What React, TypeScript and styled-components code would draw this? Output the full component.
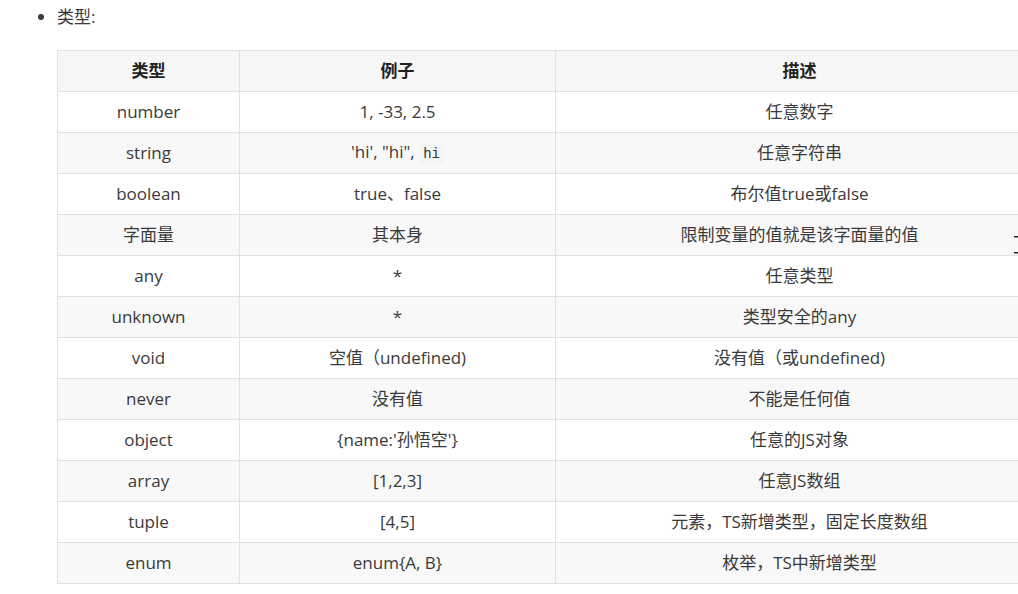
import React from "react";
import styled, { createGlobalStyle } from "styled-components";

const GlobalStyle = createGlobalStyle`
  html, body {
    margin: 0;
    padding: 0;
    overflow: hidden;
    background: #ffffff;
  }
  body {
    font-family: "Open Sans", "Noto Sans CJK SC", sans-serif;
    color: #333333;
  }
`;

const Page = styled.div`
  width: 1018px;
  height: 594px;
  overflow: hidden;
  position: relative;
`;

const List = styled.ul`
  margin: 0;
  padding: 5px 0 0 57px;
  list-style: disc;
`;

const Item = styled.li`
  font-size: 17px;
  line-height: 24px;
  color: #3a3a3a;
`;

const Table = styled.table`
  margin-top: 21px;
  width: 986px;
  border-collapse: collapse;
  table-layout: fixed;
  font-size: 17px;
`;

const Row = styled.tr<{ striped?: boolean }>`
  background-color: ${(p) => (p.striped ? "#f8f8f8" : "#ffffff")};
`;

const HeadCell = styled.th`
  height: 40px;
  padding: 0 13px;
  border: 1px solid #dfe2e5;
  background-color: #f6f6f6;
  font-weight: 700;
  text-align: center;
  color: #222;
`;

const Cell = styled.td`
  height: 40px;
  padding: 0 13px;
  border: 1px solid #dfe2e5;
  text-align: center;
  color: #3a3a3a;
`;

const Code = styled.code`
  font-family: "Liberation Mono", "DejaVu Sans Mono", monospace;
  font-size: 14px;
  background-color: #f3f4f4;
  padding: 2px 4px;
  border-radius: 3px;
  color: #333;
`;

const EdgeMark = styled.svg`
  position: absolute;
  left: 1014px;
  top: 234px;
`;

const rows: [React.ReactNode, React.ReactNode, React.ReactNode][] = [
  ["number", "1, -33, 2.5", "任意数字"],
  [
    "string",
    <>
      'hi', "hi", <Code>hi</Code>
    </>,
    "任意字符串",
  ],
  ["boolean", "true、false", "布尔值true或false"],
  ["字面量", "其本身", "限制变量的值就是该字面量的值"],
  ["any", "*", "任意类型"],
  ["unknown", "*", "类型安全的any"],
  ["void", "空值（undefined)", "没有值（或undefined)"],
  ["never", "没有值", "不能是任何值"],
  ["object", "{name:'孙悟空'}", "任意的JS对象"],
  ["array", "[1,2,3]", "任意JS数组"],
  ["tuple", "[4,5]", "元素，TS新增类型，固定长度数组"],
  ["enum", "enum{A, B}", "枚举，TS中新增类型"],
];

export default function App() {
  return (
    <Page>
      <GlobalStyle />
      <List>
        <Item>
          类型:
          <Table>
            <colgroup>
              <col style={{ width: 182 }} />
              <col style={{ width: 316 }} />
              <col style={{ width: 488 }} />
            </colgroup>
            <thead>
              <Row>
                <HeadCell>类型</HeadCell>
                <HeadCell>例子</HeadCell>
                <HeadCell>描述</HeadCell>
              </Row>
            </thead>
            <tbody>
              {rows.map((r, i) => (
                <Row key={i} striped={i % 2 === 1}>
                  <Cell>{r[0]}</Cell>
                  <Cell>{r[1]}</Cell>
                  <Cell>{r[2]}</Cell>
                </Row>
              ))}
            </tbody>
          </Table>
        </Item>
      </List>
      <EdgeMark width="4" height="22" viewBox="0 0 4 22">
        <rect x="0" y="2" width="4" height="1.5" fill="#222" />
        <rect x="0" y="18" width="4" height="1.5" fill="#222" />
      </EdgeMark>
    </Page>
  );
}
